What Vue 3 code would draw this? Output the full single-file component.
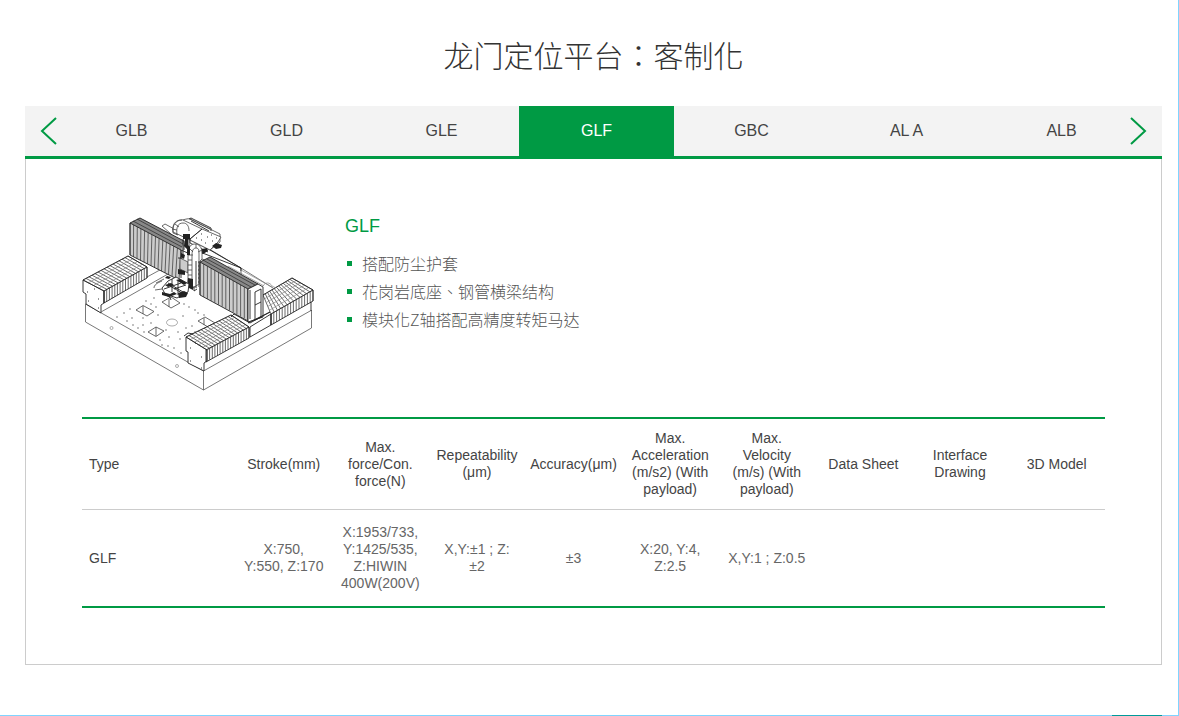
<template>
  <div class="page">
    <h1 class="page-title">龙门定位平台：客制化</h1>

    <nav class="tab-bar">
      <button type="button" class="arrow arrow-prev" aria-label="Previous" @click="move(-1)">
        <svg viewBox="0 0 17 28" width="17" height="28"><path d="M16 1 2 14l14 13" /></svg>
      </button>
      <ul class="tabs">
        <li v-for="tab in tabs" :key="tab">
          <button type="button" class="tab" :class="{ active: tab === current }" @click="current = tab">
            {{ tab }}
          </button>
        </li>
      </ul>
      <button type="button" class="arrow arrow-next" aria-label="Next" @click="move(1)">
        <svg viewBox="0 0 17 28" width="17" height="28"><path d="m1 1 14 13L1 27" /></svg>
      </button>
    </nav>

    <section class="panel">
      <div class="intro">
        <svg class="drawing" viewBox="82 210 234 186" aria-hidden="true">
          <!-- base -->
          <path class="line base" d="M85.500 304v18l118 68 108-62v-18M203.500 371v19M85.500 304l118 67L311 310.500" />
          <path class="line base" d="m101 312 67-38M147 277l22-12M241 268l32 20" />
          <circle class="line soft" cx="111.500" cy="328" r="1.500" />
          <circle class="line soft" cx="177" cy="366" r="1.500" />
          <ellipse class="line soft" cx="172" cy="322.500" rx="5.500" ry="3.500" />
          <path class="line" d="m136 310 7-4.500 11 6-7 4.500zM143 306v8M148 332l8-5 8 4-8 5.500zM156 327v9M162 302l9-5 9 6-9 5zM169 299v8M198 321l7-4 10 6-7 4zM204 318v7" />
          <circle v-for="(hole, i) in holes" :key="i" :cx="hole[0]" :cy="hole[1]" r="0.700" fill="#555" />

          <!-- rear right cover -->
          <path class="face" d="m258 300 34-22 21 12v10l-42 25-8-10z" />
          <path class="line pleat" :d="pleats([263, 295, 292, 278], [271, 314, 313, 290], 13)" />
          <path class="line soft" :d="pleats([263, 295, 271, 314], [292, 278, 313, 290], 5)" />
          <path class="line pleat" :d="pleats([271, 314, 313, 290], [271, 325, 313, 301], 15)" />
          <path class="line dark" d="m263 295 29-17 21 12v11l-42 24v-11l42-24M311 302v9M250 327l21-13v11l-21 12z" />

          <!-- rear left cover -->
          <path class="face" d="m83 280 45-24 19 11v10l-43 26-3 10-15-9v-10l-3-2z" />
          <path class="line pleat" :d="pleats([83, 280, 128, 256], [104, 291, 147, 267], 15)" />
          <path class="line soft" :d="pleats([83, 280, 104, 291], [128, 256, 147, 267], 4)" />
          <path class="line pleat" :d="pleats([104, 291, 147, 267], [104, 303, 147, 278], 16)" />
          <path class="line dark" d="M83 280l45-24 19 11v11l-43 25v-12l43-24M83 280l21 11v12l-3 2v8l-15-9v-10l-3-2z" />
          <path class="dots" d="M87 292h1M94 289h1M98 299h1M88 301h1M98 308h1" />

          <!-- cross beam -->
          <path class="face line" d="m162 226 3-2 24 13 52 31v7l-44-18z" />
          <path class="line dark" d="m200 252 41 16v3M210 250l31 18" />
          <path class="line soft" d="m241 270 31 17M228 266l36 20M263 286c2-4 7-4 9 0l4 2" />

          <!-- carriage -->
          <path class="face line" d="M173 232v-4c0-5 4-8 8-8 3 0 7-2 9-1l30 15v8l-10 8-20-10z" />
          <path class="face line" d="m190 239 12-10 19 8-3 5-8 8-20-10z" />
          <path class="line" d="M173 233c-1-8 3-13 9-13M177 235c-1-8 1-12 6-12 4 0 6 3 6 8M183 220l19 9M190 219l20 10M175 224l4 3M172 229l5 1M173 233l5 2" />
          <path class="line dark" d="m189 219 2-1 20 10v3M191 221l18 10M190 239v4l18 9M202 229l-12 10" />
          <path class="dots" d="M201 234h1M207 237h1M212 241h1M196 238h1M205 243h1M211 235h1M201 240h1M216 238h1" />
          <path class="ink" d="m212 246 4-3 6 2-1 3-5 1zM202 249l5-1 1 3-5 3-3-1z" />

          <!-- tall cover, left -->
          <path class="shade" d="M130 223v32l49 25 4-30 1-9-44-23z" />
          <path class="line pleat" :d="pleats([130, 223, 181, 250], [130, 255, 179, 280], 14)" />
          <path class="cap" d="m130 223 10-5 44 23-3 9z" />
          <path class="line ridge" d="m133 221 49 26M137 219l46 25" />
          <path class="line dark" d="M130 223v32l49 25M130 223l10-5 44 23v9M130 223l51 27v28" />

          <!-- tool head -->
          <path class="shade line" d="m180 258 8 4v11l-8-4z" />
          <path class="face line" d="M188 282v-29c0-6 3-9 7-9s7 3 7 9v6l-3 3v22l-6 4z" />
          <path class="line" d="M192 284v-29c0-4 1-7 4-7s3 3 3 6v31M188 260h4M188 265h4M188 270h4M188 275h4M188 255h5M190 249l3 3M196 244v4M202 250l-4 2" />
          <path class="dots" d="M198 262h1M198 266h1M198 270h1M198 274h1M198 278h1M198 282h1M198 286h1" />
          <path class="ink" d="M183 234h7v5h-7zM185 239h3v6l2 2v8h-3v-6l-3-3zM181 253l4 2-1 4-3-2zM178 269l7 2v4l-7-1zM188 278l5 1v11l-6-3z" />
          <path class="line dark" d="M183 239v16M189 239v14M181 250l9 4M178 258h5M194 286v5l3-2M196 261v27" />
          <path class="face line dark" d="m162 288 6-7 8-4 13 7-1 8-11 6-12-4z" />
          <path class="ink" d="m165 285 6-2 3 2-6 2zM176 280l4-1 7 4-3 2zM162 292l8 2 4-2 3 2-8 3-7-2zM178 293l6-2 4 2-2 4-7 1zM167 276l4 1-2 2-4-1z" />
          <path class="line dark" d="m168 283 15 9M172 279v13M164 289l17-6M178 281v14M163 294l7 3M174 289l12-4M170 286l12 7M169 295l2 5" />
          <path class="line" d="M154 288c0-3 3-5 8-7M155 290l7-1M164 279l-8 4" />

          <!-- tall cover, right -->
          <path class="shade" d="m200 262 10-5 48 27v33l-10 4-48-26z" />
          <path class="line pleat" :d="pleats([200, 262, 248, 289], [200, 295, 248, 320], 13)" />
          <path class="cap" d="m200 262 10-5 48 27-10 5z" />
          <path class="line ridge" d="m203 260 48 27M207 259l48 26" />
          <path class="line dark" d="m200 262 10-5 48 27-10 5zM200 262v33l48 26v-32" />
          <path class="face line dark" d="m248 289 10-5 5 3v30l-15 5z" />
          <path class="line dark" d="m255 292 6-3v28l-6 3zM255 305l6-3M250 290v29" />

          <!-- front cover -->
          <path class="face" d="m186 337 45-22 18 12v11l-43 24-2 9-16-8v-11l-2-1z" />
          <path class="line pleat" :d="pleats([186, 337, 231, 315], [207, 350, 249, 327], 15)" />
          <path class="line soft" :d="pleats([186, 337, 207, 350], [231, 315, 249, 327], 5)" />
          <path class="line pleat" :d="pleats([207, 350, 249, 327], [207, 361, 249, 338], 16)" />
          <path class="line dark" d="m231 315 18 12v11l-43 24v-12l43-23M186 337l45-22M186 337l21 13v11l-3 2v8l-16-8v-11l-2-1z" />
          <path class="line dark" d="m231 317 3-3 16 9 20-11M248 323l22-11M184 336l4-3 5 1" />
          <path class="dots" d="M190 348h1M201 357h1M190 361h1M201 368h1M195 343h1" />
        </svg>

        <div class="intro-text">
          <h2>GLF</h2>
          <ul>
            <li v-for="feature in features" :key="feature">{{ feature }}</li>
          </ul>
        </div>
      </div>

      <table class="spec-table">
        <thead>
          <tr>
            <th v-for="column in columns" :key="column" scope="col">{{ column }}</th>
          </tr>
        </thead>
        <tbody>
          <tr v-for="row in rows" :key="row[0]">
            <td v-for="(cell, i) in row" :key="i">{{ cell }}</td>
          </tr>
        </tbody>
      </table>
    </section>
    <span class="corner-mark"></span>
  </div>
</template>

<script setup>
import { ref } from 'vue';

const tabs = ['GLB', 'GLD', 'GLE', 'GLF', 'GBC', 'AL A', 'ALB'];
const current = ref('GLF');

const move = (step) => {
  const next = tabs.indexOf(current.value) + step;
  current.value = tabs[(next + tabs.length) % tabs.length];
};

const features = [
  '搭配防尘护套',
  '花岗岩底座、钢管横梁结构',
  '模块化Z轴搭配高精度转矩马达'
];

const columns = [
  'Type',
  'Stroke(mm)',
  'Max.\nforce/Con.\nforce(N)',
  'Repeatability\n(μm)',
  'Accuracy(μm)',
  'Max.\nAcceleration\n(m/s2) (With\npayload)',
  'Max.\nVelocity\n(m/s) (With\npayload)',
  'Data Sheet',
  'Interface\nDrawing',
  '3D Model'
];

const rows = [
  [
    'GLF',
    'X:750,\nY:550, Z:170',
    'X:1953/733,\nY:1425/535,\nZ:HIWIN\n400W(200V)',
    'X,Y:±1 ; Z:\n±2',
    '±3',
    'X:20, Y:4,\nZ:2.5',
    'X,Y:1 ; Z:0.5',
    '',
    '',
    ''
  ]
];

const holes = [
  [117, 317], [124, 313], [130, 309], [127, 321], [133, 325], [138, 328],
  [144, 332], [151, 323], [132, 318], [143, 318], [151, 304], [156, 307],
  [146, 301], [158, 315], [160, 340], [162, 345], [168, 346], [174, 348],
  [180, 339], [181, 353], [183, 316], [189, 307], [195, 310], [166, 330],
  [178, 332], [186, 328], [192, 326], [195, 332], [198, 313], [204, 315],
  [154, 298], [184, 304], [143, 325], [169, 337]
];

// Lines joining two edges at regular steps, for the folded covers
const pleats = (from, to, count) => {
  let d = '';
  for (let i = 0; i <= count; i++) {
    const t = i / count;
    const at = (e) => `${(e[0] + (e[2] - e[0]) * t).toFixed(1)} ${(e[1] + (e[3] - e[1]) * t).toFixed(1)}`;
    d += `M${at(from)}L${at(to)}`;
  }
  return d;
};
</script>

<style>
body {
  background: #fff;
}
</style>

<style scoped>
.page {
  position: relative;
  box-sizing: border-box;
  min-height: 100vh;
  padding: 36px 16px 50px 25px;
  border-right: 1px solid #80d4ff;
  border-bottom: 1px solid #80d4ff;
  font-family: "Liberation Sans", Arial, "Noto Sans CJK TC", sans-serif;
  color: #333;
}

.page-title {
  margin: 0 0 28px;
  font-size: 30px;
  line-height: 42px;
  font-weight: 300;
  text-align: center;
}

.tab-bar {
  position: relative;
  padding: 0 23px 0 29px;
  background: #f3f3f3;
  border-bottom: 3px solid #009a44;
}

.tabs {
  display: grid;
  grid-template-columns: repeat(7, 1fr);
  margin: 0;
  padding: 0;
  list-style: none;
}

.tab {
  width: 100%;
  height: 50px;
  padding: 0;
  border: 0;
  background: transparent;
  color: #444;
  font-family: inherit;
  font-size: 16px;
  cursor: pointer;
}

.tab.active {
  background: #009a44;
  color: #fff;
}

.arrow {
  position: absolute;
  top: 11px;
  padding: 0;
  border: 0;
  background: transparent;
  cursor: pointer;
}

.arrow svg {
  display: block;
  fill: none;
  stroke: #009a44;
  stroke-width: 2;
}

.arrow-prev {
  left: 15px;
}

.arrow-next {
  right: 15px;
}

.panel {
  padding: 51px 56px 56px;
  border: 1px solid #ccc;
  border-top: 0;
}

.intro {
  display: flex;
  gap: 29px;
  margin-bottom: 21px;
}

.drawing {
  flex: none;
  width: 234px;
  height: 186px;
}

.line {
  fill: none;
  stroke: #444;
  stroke-width: 0.8;
}

.base {
  stroke: #555;
}

.soft {
  stroke: #888;
  stroke-width: 0.7;
}

.pleat {
  stroke: #444;
  stroke-width: 0.8;
}

.ridge {
  stroke: #333;
}

.dark {
  stroke: #222;
  stroke-width: 0.9;
}

.face {
  fill: #fff;
}

.shade {
  fill: #ccc;
}

.cap {
  fill: #888;
}

.ink {
  fill: #222;
}

.dots {
  stroke: #333;
  stroke-width: 1;
}

.intro-text h2 {
  margin: 5px 0 12px;
  font-size: 18px;
  line-height: 22px;
  font-weight: 400;
  color: #009a44;
}

.intro-text ul {
  margin: 0;
  padding: 0;
  list-style: none;
}

.intro-text li {
  display: flex;
  align-items: center;
  gap: 10px;
  padding-left: 2px;
  font-family: "Noto Sans CJK TC", "Liberation Sans", sans-serif;
  font-size: 16px;
  line-height: 28px;
  font-weight: 300;
  color: #555;
}

.intro-text li::before {
  content: '';
  width: 5px;
  height: 5px;
  background: #009a44;
}

.spec-table {
  width: 100%;
  table-layout: fixed;
  border-collapse: separate;
  border-spacing: 0;
  border-top: 2px solid #009a44;
  border-bottom: 2px solid #009a44;
  font-size: 14px;
  line-height: 17px;
}

.spec-table th,
.spec-table td {
  padding: 14px 4px;
  text-align: center;
  vertical-align: middle;
  white-space: pre-line;
  font-weight: 400;
  color: #666;
}

.spec-table th {
  padding: 11px 4px;
  border-bottom: 1px solid #ccc;
  color: #444;
}

.spec-table th:first-child,
.spec-table td:first-child {
  width: 15%;
  padding-left: 7px;
  box-sizing: border-box;
  text-align: left;
  color: #444;
}

.corner-mark {
  position: absolute;
  right: 16px;
  bottom: -1px;
  width: 50px;
  height: 1px;
  background: #009a9a;
}
</style>
